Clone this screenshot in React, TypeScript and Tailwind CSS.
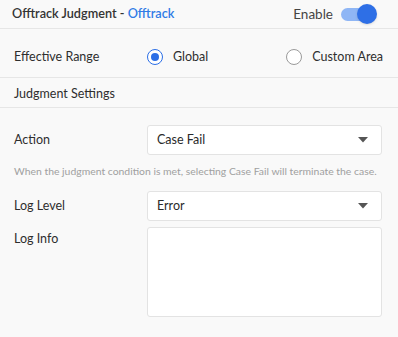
import React, { useState } from 'react';

const font = { fontFamily: '"Source Sans Pro", Lato, "Noto Sans", sans-serif' };

const Radio: React.FC<{ checked: boolean; label: string }> = ({ checked, label }) => (
  <label className="flex items-center gap-[10px] cursor-pointer">
    <span
      className={`w-[16px] h-[16px] rounded-full border-[1.5px] flex items-center justify-center bg-white ${
        checked ? 'border-[#2b6ee6]' : 'border-[#9a9a9a]'
      }`}
    >
      {checked && <span className="w-[8px] h-[8px] rounded-full bg-[#2b6ee6]" />}
    </span>
    <span className="text-[12.5px] text-[#2e2e2e]">{label}</span>
  </label>
);

const Select: React.FC<{ value: string }> = ({ value }) => (
  <div className="flex-1 h-[30px] bg-white border border-[#e3e3e3] rounded-[3px] flex items-center justify-between pl-[9px] pr-[13px]">
    <span className="text-[12.5px] text-[#2a2a2a]">{value}</span>
    <svg width="10" height="6" viewBox="0 0 10 6">
      <path d="M0 0 H10 L5 5.5 Z" fill="#555" />
    </svg>
  </div>
);

export default function App() {
  const [enabled, setEnabled] = useState(true);

  return (
    <div className="w-[398px] h-[337px] bg-[#f9f9f9] text-[#2e2e2e]" style={font}>
      {/* Header */}
      <div className="h-[29px] flex items-center justify-between pl-[12px] pr-[23px] border-b border-[#e6e6e6]">
        <div className="text-[12.7px] font-semibold text-[#333]">
          Offtrack Judgment - <span className="text-[#2f7be6]">Offtrack</span>
        </div>
        <div className="flex items-center gap-[8px]">
          <span className="text-[13.5px] text-[#444]">Enable</span>
          <button
            onClick={() => setEnabled(!enabled)}
            className="relative w-[34px] h-[20px] flex items-center"
          >
            <span className={`w-[32px] h-[13px] rounded-full ${enabled ? 'bg-[#8fb6f5]' : 'bg-[#ccc]'}`} />
            <span
              className={`absolute top-0 w-[20px] h-[20px] rounded-full shadow ${
                enabled ? 'right-[-2px] bg-[#2e6fe6]' : 'left-[-2px] bg-white'
              }`}
            />
          </button>
        </div>
      </div>

      {/* Effective Range */}
      <div className="h-[49px] flex items-center pt-[8px] pl-[14px] pr-[15px] border-b border-[#e6e6e6]">
        <span className="w-[133px] text-[12.5px]">Effective Range</span>
        <div className="flex-1 flex items-center justify-between">
          <Radio checked label="Global" />
          <Radio checked={false} label="Custom Area" />
        </div>
      </div>

      {/* Judgment Settings */}
      <div className="h-[30px] flex items-center pt-[3px] pl-[14px] border-b border-[#e6e6e6]">
        <span className="text-[12.5px]">Judgment Settings</span>
      </div>

      <div className="pl-[14px] pr-[16px] pt-[17px]">
        <div className="flex items-center">
          <span className="w-[133px] text-[12.5px]">Action</span>
          <Select value="Case Fail" />
        </div>
        <p className="mt-[9px] leading-[14px] text-[10.4px] text-[#a0a0a0] whitespace-nowrap">
          When the judgment condition is met, selecting Case Fail will terminate the case.
        </p>
        <div className="flex items-center mt-[13px]">
          <span className="w-[133px] text-[12.5px]">Log Level</span>
          <Select value="Error" />
        </div>
        <div className="flex items-start mt-[6px]">
          <span className="w-[133px] text-[12.5px] pt-[3px]">Log Info</span>
          <textarea className="flex-1 h-[90px] bg-white border border-[#e3e3e3] rounded-[3px] resize-none outline-none" />
        </div>
      </div>
    </div>
  );
}
